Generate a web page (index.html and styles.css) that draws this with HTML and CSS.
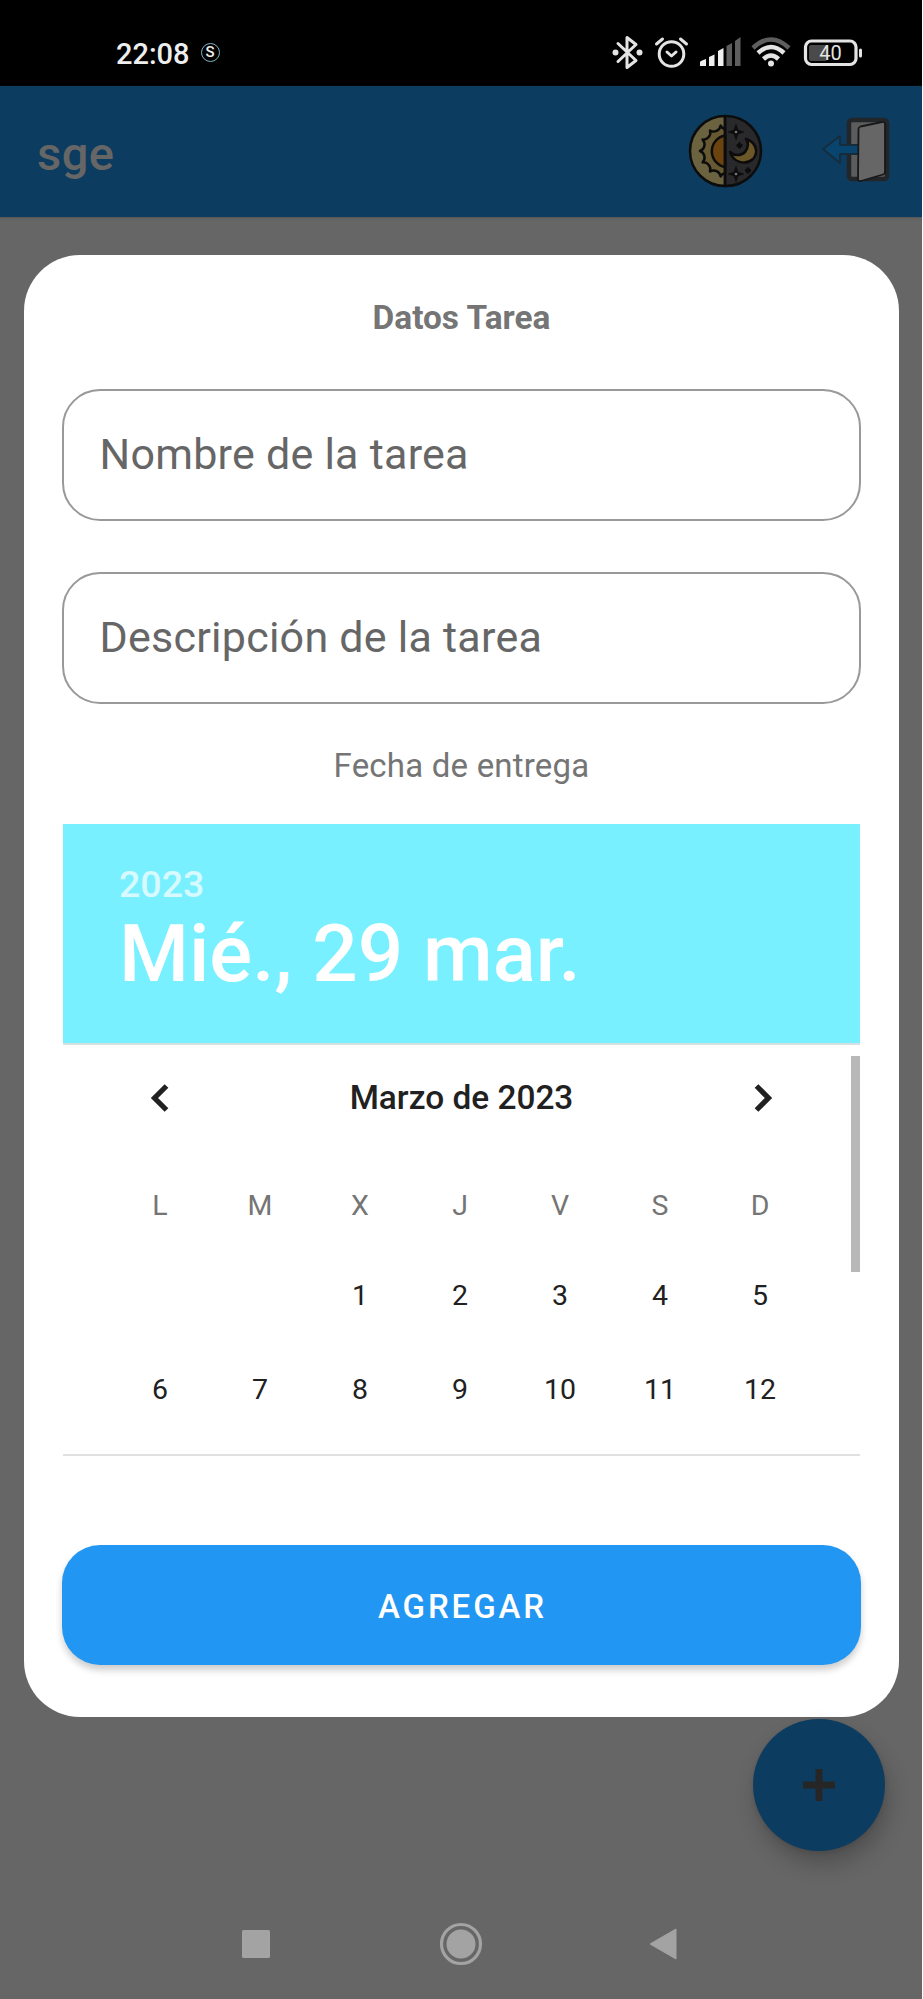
FILE: index.html
```html
<!DOCTYPE html>
<html lang="es">
<head>
<meta charset="utf-8">
<title>sge</title>
<link rel="stylesheet" href="styles.css">
</head>
<body>
<div class="screen">
  <header class="status">
    <div class="status-left">
      <span class="clock">22:08</span>
      <span class="badge">S</span>
    </div>
    <svg class="status-icons" width="262" height="40" viewBox="0 0 262 40" fill="none" stroke="#e4e4e4" stroke-width="3" stroke-linecap="round" stroke-linejoin="round">
      <path d="M7 10 25 27 16 34V4L25 11 7 28" transform="translate(0 .5)"/>
      <circle cx="4.500" cy="19.500" r="1.500" fill="#e4e4e4"/><circle cx="28.500" cy="19.500" r="1.500" fill="#e4e4e4"/>
      <circle cx="60.500" cy="21" r="12.300"/>
      <path d="m56 19 4.500 4 4.500-4M45.500 11l6-5M75.500 11l-6-5"/>
      <g stroke="none" fill="#f0f0f0">
        <path d="M89 33v-4q0-1 6-3v7zM98 33v-9l5.500-2.500V33zM107 33V18l5.500-3V33z"/>
        <path d="M115.500 33V13l5.500-3v23zM124 33V8l5.500-4V33z" fill="#5e5e5e"/>
      </g>
      <path d="M142 15q18-17 36 0" stroke="#5e5e5e" stroke-width="4.500" stroke-linecap="butt"/>
      <path d="M147 20q13-12 26 0M152.500 26q7.500-7 15 0" stroke-width="4.500" stroke-linecap="butt"/>
      <circle cx="160" cy="30.500" r="3" fill="#e4e4e4" stroke="none"/>
      <rect x="194.500" y="8" width="50.500" height="23.500" rx="6" stroke-width="3.200"/>
      <rect x="198" y="12" width="18" height="16" rx="2" fill="#4a4a4a" stroke="none"/>
      <path d="M249.500 17v6" stroke-width="3"/>
      <text x="219.500" y="27" class="battery" text-anchor="middle">40</text>
    </svg>
  </header>

  <div class="appbar">
    <h1 class="app-title">sge</h1>
    <div class="actions">
      <svg width="76" height="76" viewBox="0 0 76 76" stroke="#0c0c0c" stroke-width="2.500" stroke-linejoin="round">
        <circle cx="38" cy="38" r="35" fill="#29292b"/>
        <path d="M37 3a35 35 0 0 0 0 70z" fill="#6b6340"/>
        <path d="M37 15.500Q34 15.500 32.600 12.600A7 7 0 0 1 22 17.500 7 7 0 0 1 14.600 26.600 7 7 0 0 1 12 38 7 7 0 0 1 14.600 49.400 7 7 0 0 1 22 58.500 7 7 0 0 1 32.600 63.400Q34 60.500 37 60.500z" fill="#675a33"/>
        <path d="M37 22.500a16 16 0 0 0 0 31.500z" fill="#6b430f"/>
        <path d="M37 3v70"/>
        <path d="M58 26c10 3 13 13 7 20-8 7-20 3-23-7 4 4 11 4 15 0 3-4 4-9 1-13z" fill="#6c5729"/>
        <path d="m48 11 2 6 6 2-6 2-2 6-2-6-6-2 6-2zM48 53l2 6 6 2-6 2-2 6-2-6-6-2 6-2z" fill="#0c0c0c" stroke-width=".5"/>
        <path d="M51.500 29.500v6m-3-3h6M60 54.500v6m-3-3h6" stroke-width="3"/>
        <circle cx="48" cy="19" r="1.300" fill="#777" stroke="none"/><circle cx="48" cy="61" r="1.300" fill="#777" stroke="none"/>
      </svg>
      <svg width="70" height="70" viewBox="0 0 70 70" stroke-linejoin="round">
        <rect x="28" y="4" width="38" height="59" rx="3" fill="#5c5c5c" stroke="#232629" stroke-width="4.500"/>
        <path d="m2 33 17-13v9h22v9H19v9z" fill="#07456f" stroke="#172c3b" stroke-width="1.800"/>
        <path d="M37.500 13q0-2 2-2.500L61 6q3-.5 3 2v48q0 2-2 2.500L40 65q-3 .5-3-2z" fill="#666" stroke="#181818" stroke-width="1.800"/>
      </svg>
    </div>
  </div>

  <main class="content">
    <section class="dialog">
      <h2 class="dialog-title">Datos Tarea</h2>
      <div class="field">Nombre de la tarea</div>
      <div class="field">Descripción de la tarea</div>
      <p class="date-label">Fecha de entrega</p>
      <div class="picker">
        <div class="picker-head">
          <div class="year">2023</div>
          <div class="date">Mié., 29 mar.</div>
        </div>
        <div class="calendar">
          <div class="month">
            <svg width="20" height="32" viewBox="0 0 20 32"><path d="M16.500 4 4.500 16l12 12" class="chevron"/></svg>
            <span>Marzo de 2023</span>
            <svg width="20" height="32" viewBox="0 0 20 32"><path d="m3.500 4 12 12-12 12" class="chevron"/></svg>
          </div>
          <div class="week names"><span>L</span><span>M</span><span>X</span><span>J</span><span>V</span><span>S</span><span>D</span></div>
          <div class="week"><span></span><span></span><span>1</span><span>2</span><span>3</span><span>4</span><span>5</span></div>
          <div class="week"><span>6</span><span>7</span><span>8</span><span>9</span><span>10</span><span>11</span><span>12</span></div>
          <div class="scrollbar"></div>
        </div>
      </div>
      <button class="submit">AGREGAR</button>
    </section>
    <div class="fab">
      <svg width="32" height="32" viewBox="0 0 32 32"><path d="M16 0v32M0 16h32" stroke="#262626" stroke-width="7"/></svg>
    </div>
  </main>

  <nav class="navbar">
    <svg width="28" height="28" viewBox="0 0 28 28"><rect width="28" height="28" rx="1.500" fill="#a3a3a3"/></svg>
    <svg class="home" width="44" height="44" viewBox="0 0 44 44"><circle cx="22" cy="22" r="19.500" fill="none" stroke="#a3a3a3" stroke-width="3.200"/><circle cx="22" cy="22" r="14.500" fill="#a3a3a3"/></svg>
    <svg width="28" height="32" viewBox="0 0 28 32"><path d="M27 1v30L1 16z" fill="#a3a3a3" stroke="#a3a3a3" stroke-linejoin="round"/></svg>
  </nav>
</div>
</body>
</html>
```
FILE: styles.css
```css
* { box-sizing: border-box; }
body { margin: 0; background: #fff; font-family: Roboto, sans-serif; }
h1, h2, p { margin: 0; }
svg { display: block; flex: none; }
.screen { width: 922px; height: 1999px; display: flex; flex-direction: column; background: #666; overflow: hidden; }

.status { height: 86px; flex: none; background: #000; display: flex; justify-content: space-between; padding: 33px 49px 0 116px; }
.status-left { display: flex; gap: 11px; }
.clock { font-size: 29px; line-height: 42px; font-weight: 500; color: #eee; white-space: nowrap; }
.badge { width: 19px; height: 19px; margin-top: 10px; border: 1.5px solid #7fb4c0; border-radius: 50%; color: #eee; font-size: 15px; line-height: 17px; text-align: center; font-weight: 500; }
.battery { font: 400 20px Roboto, sans-serif; fill: #e4e4e4; stroke: none; }

.appbar { height: 131px; flex: none; background: #0d3c61; display: flex; align-items: center; justify-content: space-between; padding: 0 31px 2px 37px; box-shadow: 0 1px 2px #555; }
.app-title { font-size: 47px; font-weight: 500; color: #666; letter-spacing: .5px; line-height: 60px; padding-top: 6px; }
.actions { display: flex; align-items: center; gap: 57px; }

.content { flex: none; height: 1666px; padding: 38px 23px 0 24px; display: flex; flex-direction: column; }
.dialog { height: 1462px; flex: none; background: #fff; border-radius: 56px; padding: 39px 38px 0; display: flex; flex-direction: column; }
.dialog-title { font-size: 33.4px; line-height: 48px; font-weight: 700; color: #757575; text-align: center; }
.field { height: 132px; margin-top: 47px; border: 2px solid #999; border-radius: 38px; padding: 0 35.5px; font-size: 43px; line-height: 127px; letter-spacing: .25px; color: #666; }
.field + .field { margin-top: 51px; }
.date-label { margin-top: 38px; font-size: 33px; line-height: 48px; color: #757575; text-align: center; letter-spacing: .2px; }
.picker { margin: 34px 1px 0; }
.picker-head { height: 219px; background: #78f0ff; padding: 38px 56px; color: #fff; white-space: nowrap; }
.year { font-size: 37.5px; line-height: 45px; font-weight: 500; opacity: .7; }
.date { font-size: 80px; line-height: 94px; font-weight: 500; }
.calendar { position: relative; height: 413px; border-top: 2px solid #d4e0e2; border-bottom: 2px solid #e0e0e0; padding: 0 50px 0 47px; }
.month { display: flex; justify-content: space-between; align-items: center; height: 105px; padding: 0 37px 0 40px; font-size: 33.4px; font-weight: 500; color: #212121; }
.chevron { fill: none; stroke: #212121; stroke-width: 5.2; }
.week { display: grid; grid-template-columns: repeat(7, 1fr); height: 94px; align-items: center; text-align: center; font-size: 28.5px; color: #212121; }
.names { height: 110px; color: #757575; margin-bottom: -12px; }
.scrollbar { position: absolute; right: 0; top: 11px; width: 9px; height: 216px; background: #b8b8b8; }
.submit { height: 120px; flex: none; margin-top: 89px; border: 0; border-radius: 38px; background: #2196f3; color: #fff; font: 500 33px Roboto, sans-serif; letter-spacing: 2.9px; padding: 3px 0 0 2px; box-shadow: 0 5px 7px rgba(0,0,0,.2); }
.fab { width: 132px; height: 132px; flex: none; margin: 2px 14px 0 auto; border-radius: 50%; background: #0d3c61; display: flex; align-items: center; justify-content: center; box-shadow: 4px 13px 22px rgba(0,0,0,.22), 0 2px 5px rgba(0,0,0,.1); }
.navbar { flex: none; height: 116px; display: flex; align-items: center; justify-content: space-between; padding: 5px 245px 0 242px; }
.home { margin-left: 3px; }
```
